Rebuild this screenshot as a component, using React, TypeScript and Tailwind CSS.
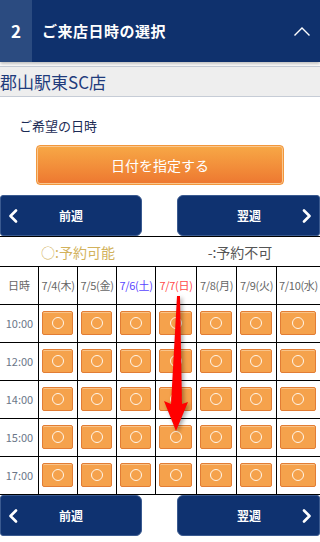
import React from "react";

const dates = [
  { t: "7/4(木)", c: "text-[#666666]" },
  { t: "7/5(金)", c: "text-[#666666]" },
  { t: "7/6(土)", c: "text-[#5a46ff]" },
  { t: "7/7(日)", c: "text-[#ff4a4a]" },
  { t: "7/8(月)", c: "text-[#666666]" },
  { t: "7/9(火)", c: "text-[#666666]" },
  { t: "7/10(水)", c: "text-[#666666]" },
];
const times = ["10:00", "12:00", "14:00", "15:00", "17:00"];
const cols = "grid grid-cols-[39px_39px_39px_39px_41px_40px_40px_43px]";

function Slot() {
  return (
    <div className="w-full h-[24px] rounded-[2px] border border-[#e27d34] bg-[#f5a24c] shadow-[inset_0_1px_0_#f9c48a] flex items-center justify-center">
      <div className="w-[12px] h-[12px] rounded-full border border-[#fff6ea]" />
    </div>
  );
}

function Chevron({ dir }: { dir: "l" | "r" }) {
  return (
    <svg width="10" height="14" viewBox="0 0 10 14" className="block">
      <path
        d={dir === "l" ? "M8 1.5 L2.5 7 L8 12.5" : "M2 1.5 L7.5 7 L2 12.5"}
        fill="none"
        stroke="white"
        strokeWidth="2.6"
        strokeLinecap="round"
        strokeLinejoin="round"
      />
    </svg>
  );
}

function NavRow() {
  return (
    <div className="flex justify-between h-[41px]">
      <button className="relative w-[142px] h-full bg-[#0f3270] rounded-r-[6px] rounded-l-[3px] border border-[#3a5a90] flex items-center justify-center">
        <span className="absolute left-[7px] top-1/2 -translate-y-1/2"><Chevron dir="l" /></span>
        <span className="text-white font-bold text-[12px]">前週</span>
      </button>
      <button className="relative w-[143px] h-full bg-[#0f3270] rounded-l-[6px] rounded-r-[3px] border border-[#3a5a90] flex items-center justify-center">
        <span className="text-white font-bold text-[12px] pr-[1px] ml-[2px]">翌週</span>
        <span className="absolute right-[7px] top-1/2 -translate-y-1/2"><Chevron dir="r" /></span>
      </button>
    </div>
  );
}

export default function App() {
  return (
    <div
      className="relative w-[320px] h-[542px] bg-white overflow-hidden"
      style={{ fontFamily: '"Noto Sans CJK JP", "Noto Sans", sans-serif' }}
    >
      {/* header */}
      <div className="flex h-[62px] shadow-[0_2px_3px_rgba(0,0,0,0.25)] relative z-10">
        <div className="w-[32px] bg-[#2b4b80] flex items-center justify-center text-white font-bold text-[17px]">2</div>
        <div className="flex-1 bg-[#0f316d] flex items-center justify-between pl-[10px] pr-[9px]">
          <span className="text-white font-bold text-[15px] tracking-[0.5px]">ご来店日時の選択</span>
          <svg width="18" height="12" viewBox="0 0 18 12">
            <path d="M1.5 10.5 L9 3 L16.5 10.5" fill="none" stroke="white" strokeWidth="1.4" />
          </svg>
        </div>
      </div>
      <div className="h-[4px]" />
      {/* store */}
      <div className="h-[31px] bg-[#eeeeee] border-y border-[#c6ccd6] flex items-center text-[17px] text-[#1f3b7c] leading-none">
        郡山駅東SC店
      </div>
      <div className="pl-[19px] pt-[21px] text-[13px] leading-[16px] text-[#1b2b55]">ご希望の日時</div>
      {/* orange */}
      <div className="px-[36px] pt-[11px]">
        <button className="w-full h-[40px] rounded-[4px] bg-gradient-to-b from-[#f7a846] to-[#ed7730] border border-[#f2973c] shadow-[inset_0_0_0_1px_#f9c78f] text-white text-[14px] flex items-center justify-center">
          日付を指定する
        </button>
      </div>
      <div className="pt-[10px]">
        <NavRow />
      </div>
      <div className="border-b border-black" />
      {/* legend */}
      <div className="grid grid-cols-2 h-[29px] items-center text-[14px] leading-none">
        <div className="text-[#d2b25c] text-center pr-[4px]">○:予約可能</div>
        <div className="text-[#555555] text-center">-:予約不可</div>
      </div>
      {/* table */}
      <div className="border-t border-black">
        <div className={`${cols} h-[38px] border-b border-black`}>
          <div className="border-r border-black flex items-center justify-center text-[11px] text-[#666666]">日時</div>
          {dates.map((d, i) => (
            <div
              key={d.t}
              className={`flex items-center justify-center text-[11px] whitespace-nowrap tracking-[-0.3px] ${d.c} ${i < 6 ? "border-r border-black" : ""}`}
            >
              {d.t}
            </div>
          ))}
        </div>
        {times.map((t) => (
          <div key={t} className={`${cols} h-[38px] border-b border-black`}>
            <div className="border-r border-black flex items-center justify-center text-[11px] text-[#6b7688] pl-[1px]">{t}</div>
            {dates.map((d, i) => (
              <div key={d.t} className={`flex items-center pl-[3px] pr-[4px] pb-[1px] ${i < 6 ? "border-r border-black" : ""}`}>
                <Slot />
              </div>
            ))}
          </div>
        ))}
      </div>
      <NavRow />

      {/* red arrow overlay */}
      <svg
        className="absolute left-0 top-0 pointer-events-none"
        width="320"
        height="542"
        viewBox="0 0 320 542"
        style={{ filter: "drop-shadow(2px 2px 2px rgba(0,0,0,0.35))" }}
      >
        <polygon
          points="177,296 180,296 182,404 188,402 176,431 164,401 171,404"
          fill="#ff0000"
        />
      </svg>
    </div>
  );
}
